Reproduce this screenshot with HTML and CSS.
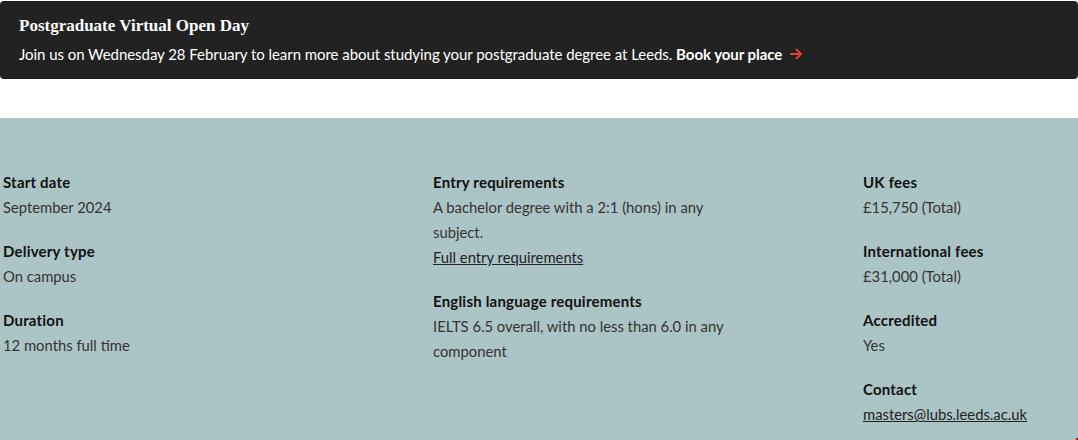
FILE: index.html
```html
<!DOCTYPE html>
<html>
<head>
<meta charset="utf-8">
<link rel="stylesheet" href="styles.css">
</head>
<body>
<div class="banner">
  <div class="banner-title">Postgraduate Virtual Open Day</div>
  <div class="banner-text">Join us on Wednesday 28 February to learn more about studying your postgraduate degree at Leeds. <a class="banner-link" href="#">Book your place <svg class="arrow" width="14" height="14" viewBox="0 0 14 14"><path d="M1 7H12M7 2L12 7L7 12" fill="none" stroke="#e8402e" stroke-width="1.8"/></svg></a></div>
</div>
<div class="facts">
  <div class="col">
    <div class="item"><div class="label">Start date</div><div class="value">September 2024</div></div>
    <div class="item"><div class="label">Delivery type</div><div class="value">On campus</div></div>
    <div class="item"><div class="label">Duration</div><div class="value">12 months full time</div></div>
  </div>
  <div class="col">
    <div class="item"><div class="label">Entry requirements</div><div class="value">A bachelor degree with a 2:1 (hons) in any subject.<br><a href="#" class="link">Full entry requirements</a></div></div>
    <div class="item"><div class="label">English language requirements</div><div class="value">IELTS 6.5 overall, with no less than 6.0 in any component</div></div>
  </div>
  <div class="col">
    <div class="item"><div class="label">UK fees</div><div class="value">£15,750 (Total)</div></div>
    <div class="item"><div class="label">International fees</div><div class="value">£31,000 (Total)</div></div>
    <div class="item"><div class="label">Accredited</div><div class="value">Yes</div></div>
    <div class="item"><div class="label">Contact</div><div class="value"><a href="#" class="link">masters@lubs.leeds.ac.uk</a></div></div>
  </div>
</div>
<div class="corner"></div>
</body>
</html>
```

FILE: styles.css
```css
html, body {
  margin: 0;
  padding: 0;
  background: #fff;
  overflow: hidden;
}
body {
  font-family: "Lato", "Noto Sans", sans-serif;
  width: 1078px;
  height: 440px;
  position: relative;
}
.banner {
  margin-top: 1px;
  height: 78px;
  box-sizing: border-box;
  background: #222222;
  border-radius: 4px;
  padding: 15px 19px 0;
  color: #fff;
}
.banner-title {
  font-family: "Liberation Serif", "DejaVu Serif", serif;
  font-weight: bold;
  font-size: 17px;
  line-height: 20px;
}
.banner-text {
  margin-top: 8px;
  font-size: 15px;
  line-height: 20px;
  letter-spacing: -0.05px;
}
.banner-link {
  color: #fff;
  font-weight: bold;
  text-decoration: none;
}
.arrow {
  vertical-align: -1px;
  margin-left: 3px;
}
.facts {
  margin-top: 39px;
  background: #abc5c6;
  height: 322px;
  box-sizing: border-box;
  padding: 52px 0 0 3px;
  display: grid;
  grid-template-columns: 430px 430px 215px;
  color: #1f1f1f;
}
.col {
  display: flex;
  flex-direction: column;
  gap: 19px;
}
.col:nth-child(2) .value {
  width: 300px;
}
.label {
  font-weight: bold;
  font-size: 15px;
  letter-spacing: 0.2px;
  line-height: 25px;
  color: #111;
}
.value {
  font-size: 14.8px;
  line-height: 25px;
  color: #333;
}
.link {
  color: #222;
  text-decoration: underline;
}
.corner {
  position: absolute;
  right: 0;
  bottom: 0;
  width: 2px;
  height: 2px;
  background: #c00;
}
```
